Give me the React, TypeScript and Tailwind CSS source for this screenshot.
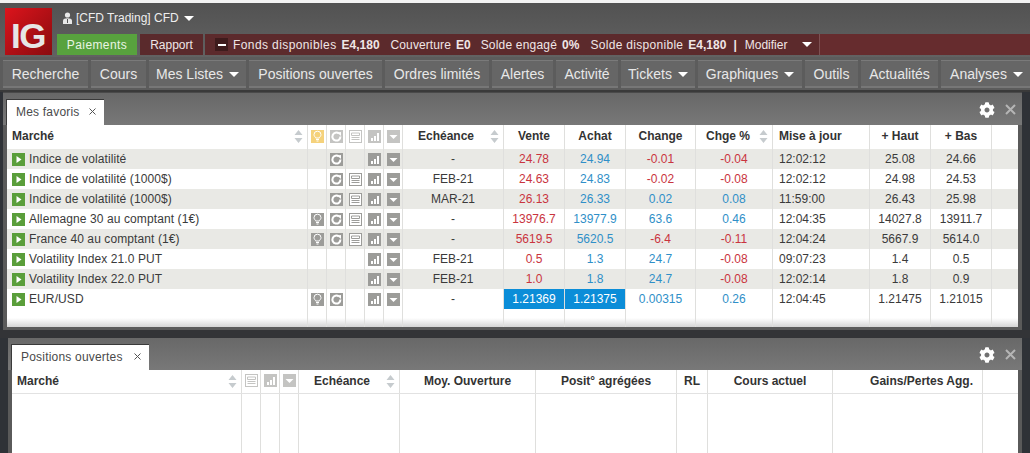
import React from "react";
import { FaCog } from "react-icons/fa";

const Tri = ({ c = "#fff", w = 10, h = 5 }: { c?: string; w?: number; h?: number }) => (
  <svg width={w} height={h} viewBox="0 0 10 5" className="shrink-0"><path d="M0 0H10L5 5Z" fill={c} /></svg>
);

const Sort = () => (
  <svg width="9" height="15" viewBox="0 0 9 15" className="shrink-0"><path d="M4.5 1L8.5 6H.5Z M4.5 14L.5 9H8.5Z" fill="#c6cbce" /></svg>
);

type Ic = "bulb" | "refresh" | "news" | "chart" | "menu";

const Icon = ({ k, head }: { k: Ic; head?: boolean }) => {
  const bg = head ? (k === "bulb" ? "#f5d27c" : "#c4c4c2") : "#9c9c99";
  if (k === "news")
    return (
      <svg width="13" height="13" viewBox="0 0 13 13">
        <rect x=".5" y=".5" width="12" height="12" fill="#fff" stroke={head ? "#c4c4c2" : "#9c9c99"} />
        <path d="M2.5 3H10.5V5.5H2.5Z" fill="none" stroke={head ? "#c4c4c2" : "#9c9c99"} />
        <path d="M2.5 7.5H10.5M2.5 9.5H10.5" stroke={head ? "#c4c4c2" : "#9c9c99"} />
      </svg>
    );
  return (
    <svg width="13" height="13" viewBox="0 0 13 13">
      <rect width="13" height="13" fill={bg} />
      {k === "bulb" && (
        <g fill="none" stroke="#fff">
          <path d="M4.7 8C4.5 7 3 6.4 3 4.6A3.5 3.4 0 0 1 10 4.6C10 6.4 8.5 7 8.3 8Z" />
          <path d="M5 9.5H8M5.5 11H7.5" />
        </g>
      )}
      {k === "refresh" && (
        <g fill="none">
          <path d="M8.8 3.4A4 4 0 1 0 10.4 6.5" stroke="#fff" strokeWidth="2" />
          <path d="M7 2.4L11 2V6Z" fill="#fff" />
        </g>
      )}
      {k === "chart" && <path d="M3 8H5V11H3ZM6 6H8V11H6ZM9 3H11V11H9Z" fill="#fff" />}
      {k === "menu" && <path d="M2.5 5H10.5L6.5 9Z" fill="#fff" />}
    </svg>
  );
};

const navItems: [string, string, boolean][] = [
  ["Recherche", "w-[88px]", false],
  ["Cours", "w-[58px]", false],
  ["Mes Listes", "w-[100px]", true],
  ["Positions ouvertes", "w-[136px]", false],
  ["Ordres limités", "w-[107px]", false],
  ["Alertes", "w-[64px]", false],
  ["Activité", "w-[65px]", false],
  ["Tickets", "w-[77px]", true],
  ["Graphiques", "w-[107px]", true],
  ["Outils", "w-[56px]", false],
  ["Actualités", "w-[80px]", false],
  ["Analyses", "w-[94px]", true],
];

const cols1 = "grid grid-cols-[301px_19px_19px_19px_19px_19px_101px_61px_61px_70px_77px_97px_61px_61px_26px]";
const cols2 = "grid grid-cols-[230px_19px_19px_19px_101px_136px_141px_31px_125px_150px_35px]";

const R = "text-[#c9343e]";
const B = "text-[#2f8fc8]";

type Row = {
  name: string;
  ic: (Ic | null)[];
  ech: string;
  v: string;
  a: string;
  ch: string;
  pc: string;
  t: string;
  h: string;
  l: string;
  hl?: boolean;
};

const rows: Row[] = [
  { name: "Indice de volatilité", ic: [null, "refresh", null, "chart", "menu"], ech: "-", v: "24.78", a: "24.94", ch: "-0.01", pc: "-0.04", t: "12:02:12", h: "25.08", l: "24.66" },
  { name: "Indice de volatilité (1000$)", ic: [null, "refresh", "news", "chart", "menu"], ech: "FEB-21", v: "24.63", a: "24.83", ch: "-0.02", pc: "-0.08", t: "12:02:12", h: "24.98", l: "24.53" },
  { name: "Indice de volatilité (1000$)", ic: [null, "refresh", "news", "chart", "menu"], ech: "MAR-21", v: "26.13", a: "26.33", ch: "0.02", pc: "0.08", t: "11:59:00", h: "26.43", l: "25.98" },
  { name: "Allemagne 30 au comptant (1€)", ic: ["bulb", "refresh", "news", "chart", "menu"], ech: "-", v: "13976.7", a: "13977.9", ch: "63.6", pc: "0.46", t: "12:04:35", h: "14027.8", l: "13911.7" },
  { name: "France 40 au comptant (1€)", ic: ["bulb", "refresh", "news", "chart", "menu"], ech: "-", v: "5619.5", a: "5620.5", ch: "-6.4", pc: "-0.11", t: "12:04:24", h: "5667.9", l: "5614.0" },
  { name: "Volatility Index 21.0 PUT", ic: [null, null, null, "chart", "menu"], ech: "FEB-21", v: "0.5", a: "1.3", ch: "24.7", pc: "-0.08", t: "09:07:23", h: "1.4", l: "0.5" },
  { name: "Volatility Index 22.0 PUT", ic: [null, null, null, "chart", "menu"], ech: "FEB-21", v: "1.0", a: "1.8", ch: "24.7", pc: "-0.08", t: "12:02:14", h: "1.8", l: "0.9" },
  { name: "EUR/USD", ic: ["bulb", "refresh", null, "chart", "menu"], ech: "-", v: "1.21369", a: "1.21375", ch: "0.00315", pc: "0.26", t: "12:04:45", h: "1.21475", l: "1.21015", hl: true },
];

const sep = "border-r border-[#dfdfdd]";
const cell = `${sep} flex items-center justify-center h-full`;

const IconCell = ({ k, head }: { k: Ic | null; head?: boolean }) => (
  <div className={`${cell} ${head ? "pb-[2px]" : ""}`}>{k && <Icon k={k} head={head} />}</div>
);

const Head = ({ children, sort, cls = "" }: { children?: React.ReactNode; sort?: boolean; cls?: string }) => (
  <div className={`${sep} relative flex items-center h-full pb-[2px] font-bold ${cls}`}>
    <span>{children}</span>
    {sort && <span className="absolute right-[4px] top-[4px] flex"><Sort /></span>}
  </div>
);

const PanelBar = ({ label, tabCls }: { label: string; tabCls: string }) => (
  <div className="h-[32px] flex items-end justify-between bg-gradient-to-b from-[#686868] to-[#787878]">
    <div className={`h-[26px] pb-[2px] bg-white flex items-center border-t border-l border-[#3a3a3a] text-[12px] tracking-[0.2px] text-[#4a4a4a] ${tabCls}`}>
      <span>{label}</span>
      <svg width="7" height="7" viewBox="0 0 7 7" className="ml-auto"><path d="M.5.5L6.5 6.5M6.5.5L.5 6.5" stroke="#555" fill="none" /></svg>
    </div>
    <div className="flex items-center self-center gap-[9px] pr-[6px] pt-[1px] text-white">
      <FaCog size={16} className="-translate-x-[1px]" />
      <svg width="11" height="11" viewBox="0 0 11 11"><path d="M1 1L10 10M10 1L1 10" stroke="#b5b5b5" strokeWidth="2" fill="none" /></svg>
    </div>
  </div>
);

export default function App() {
  return (
    <div className="w-[1030px] h-[453px] overflow-hidden bg-[#2f3237] text-[12px] font-['Liberation_Sans',Arial,sans-serif]">
      <div className="h-[3px] bg-[#f2f2f2]" />
      {/* Header */}
      <div className="h-[54px] flex bg-gradient-to-b from-[#525252] to-[#626262]">
        <div className="ml-[5px] mt-[5px] w-[47px] h-[47px] flex items-center justify-center bg-gradient-to-br from-[#dc141c] to-[#8a0b0f] text-[#e6e6e6] text-[35px] font-bold leading-none">
          <span className="pt-[7px] tracking-[-1.5px] mr-[1px]">IG</span>
        </div>
        <div className="flex-1 ml-[5px] flex flex-col">
          <div className="h-[26px] flex items-center pl-[5px] pt-[4px] text-[#eeeeee]">
            <svg width="11" height="12" viewBox="0 0 11 12" className="mr-[3px]">
              <circle cx="5.5" cy="3" r="2.6" fill="#e8e8e8" />
              <path d="M1 12V8.5C1 7 3 6.2 5.5 6.2S10 7 10 8.5V12Z" fill="#e8e8e8" />
              <path d="M5.5 7V11" stroke="#555" />
            </svg>
            <span>[CFD Trading] CFD</span>
            <span className="ml-[5px]"><Tri /></span>
          </div>
          <div className="h-[21px] mt-[5px] flex text-[#f0e6e6]">
            <div className="w-[80px] bg-[#58a23e] flex items-center justify-center text-[#e9f5e4] tracking-[0.4px]">Paiements</div>
            <div className="w-[63px] ml-[3px] bg-[#5a2a2c] flex items-center justify-center">Rapport</div>
            <div className="flex-1 ml-[2px] flex bg-[#662c2e]">
              <div className="w-[615px] flex items-center bg-[#5c2a2c] border-r border-[#7d5052]">
                <span className="ml-[10px] mr-[5px] w-[13px] h-[13px] bg-[#3e1c1d] flex items-center justify-center">
                  <span className="w-[8px] h-[2px] bg-white" />
                </span>
                <span className="tracking-[0.4px]">Fonds disponibles</span>
                <b className="ml-[5px]">E4,180</b>
                <span className="ml-[11px] tracking-[0.1px]">Couverture</span>
                <b className="ml-[5px]">E0</b>
                <span className="ml-[10px] tracking-[0.2px]">Solde engagé</span>
                <b className="ml-[5px]">0%</b>
                <span className="ml-[11px] tracking-[0.3px]">Solde disponible</span>
                <b className="ml-[5px]">E4,180</b>
                <b className="ml-[7px]">|</b>
                <span className="ml-[8px]">Modifier</span>
                <span className="ml-[15px]"><Tri /></span>
              </div>
            </div>
          </div>
        </div>
      </div>
      {/* Nav */}
      <div className="h-[35px] flex items-start pl-[3px] pt-[3px] bg-[#5c5c5c] border-b-2 border-[#3a3a3a] overflow-hidden">
        {navItems.map(([t, w, arrow]) => (
          <div key={t} className={`${w} shrink-0 pr-[3px] h-[28px]`}>
            <div className="h-full flex items-center justify-center gap-[6px] pt-[1px] bg-[#666666] border-t border-[#7a7a7a] border-b-2 border-b-[#777777] text-[14px] text-[#e8e8e8]">
              <span>{t}</span>
              {arrow && <Tri />}
            </div>
          </div>
        ))}
      </div>
      {/* Panel 1 */}
      <div className="ml-[3px] w-[1019px] h-[238px] bg-[#5a5a5a] border-t border-[#4a4a4a] px-[4px]">
        <div className="-mx-[4px]">
          <PanelBar label="Mes favoris" tabCls="ml-[3px] w-[98px] pl-[9px] pr-[8px]" />
        </div>
        <div className="h-[202px] flex flex-col bg-white text-[#3a3a3a] text-center">
          <div className={`${cols1} h-[24px] text-[#333]`}>
            <Head sort cls="pl-[5px]">Marché</Head>
            <IconCell k="bulb" head />
            <IconCell k="refresh" head />
            <IconCell k="news" head />
            <IconCell k="chart" head />
            <IconCell k="menu" head />
            <Head sort cls="pl-[15px]">Echéance</Head>
            <Head cls="justify-center">Vente</Head>
            <Head cls="justify-center">Achat</Head>
            <Head cls="justify-center">Change</Head>
            <Head sort cls="pl-[10px]">Chge %</Head>
            <Head cls="pl-[6px]">Mise à jour</Head>
            <Head cls="justify-center">+ Haut</Head>
            <Head cls="justify-center">+ Bas</Head>
            <div />
          </div>
          {rows.map((r, i) => {
            const col = (s: string) => (s.startsWith("-") ? R : B);
            return (
              <div key={i} className={`${cols1} h-[20px] ${i % 2 === 0 ? "bg-[#e9e9e5]" : ""}`}>
                <div className={`${sep} flex items-center h-full pl-[5px] text-left`}>
                  <svg width="13" height="13" viewBox="0 0 13 13" className="mr-[4px]">
                    <rect width="13" height="13" fill="#5a9e3a" />
                    <path d="M4.5 3L9.5 6.5L4.5 10Z" fill="#fff" />
                  </svg>
                  <span className="tracking-[0.1px]">{r.name}</span>
                </div>
                {r.ic.map((k, j) => <IconCell key={j} k={k} />)}
                <div className={cell}>{r.ech}</div>
                <div className={`${cell} ${r.hl ? "bg-[#0b8dd8] text-white" : R}`}>{r.v}</div>
                <div className={`${cell} ${r.hl ? "bg-[#0b8dd8] text-white" : B}`}>{r.a}</div>
                <div className={`${cell} ${col(r.ch)}`}>{r.ch}</div>
                <div className={`${cell} ${col(r.pc)}`}>{r.pc}</div>
                <div className={`${sep} flex items-center h-full pl-[6px]`}>{r.t}</div>
                <div className={cell}>{r.h}</div>
                <div className={cell}>{r.l}</div>
                <div />
              </div>
            );
          })}
          <div className={`${cols1} flex-1 bg-gradient-to-b from-white from-50% to-[#d4d4d4]`}>
            {Array.from({ length: 14 }).map((_, i) => <div key={i} className={sep} />)}
            <div />
          </div>
        </div>
      </div>
      {/* Gap */}
      <div className="h-[8px] bg-[#333437]" />
      {/* Panel 2 */}
      <div className="ml-[8px] w-[1014px] h-[115px] bg-[#5a5a5a] px-[4px]">
        <div className="-mx-[4px]">
          <PanelBar label="Positions ouvertes" tabCls="ml-[3px] w-[138px] pl-[9px] pr-[8px]" />
        </div>
        <div className="h-[83px] flex flex-col bg-white text-[#333]">
          <div className={`${cols2} h-[24px] border-b border-[#e2e2e2]`}>
            <Head sort cls="pl-[5px]">Marché</Head>
            <IconCell k="news" head />
            <IconCell k="chart" head />
            <IconCell k="menu" head />
            <Head sort cls="pl-[15px]">Echéance</Head>
            <Head cls="justify-center">Moy. Ouverture</Head>
            <Head cls="justify-center">Posit° agrégées</Head>
            <Head cls="justify-center">RL</Head>
            <Head cls="justify-center">Cours actuel</Head>
            <Head cls="justify-end pr-[9px]">Gains/Pertes Agg.</Head>
            <div />
          </div>
          <div className={`${cols2} flex-1`}>
            {Array.from({ length: 10 }).map((_, i) => <div key={i} className={sep} />)}
            <div />
          </div>
        </div>
      </div>
    </div>
  );
}
